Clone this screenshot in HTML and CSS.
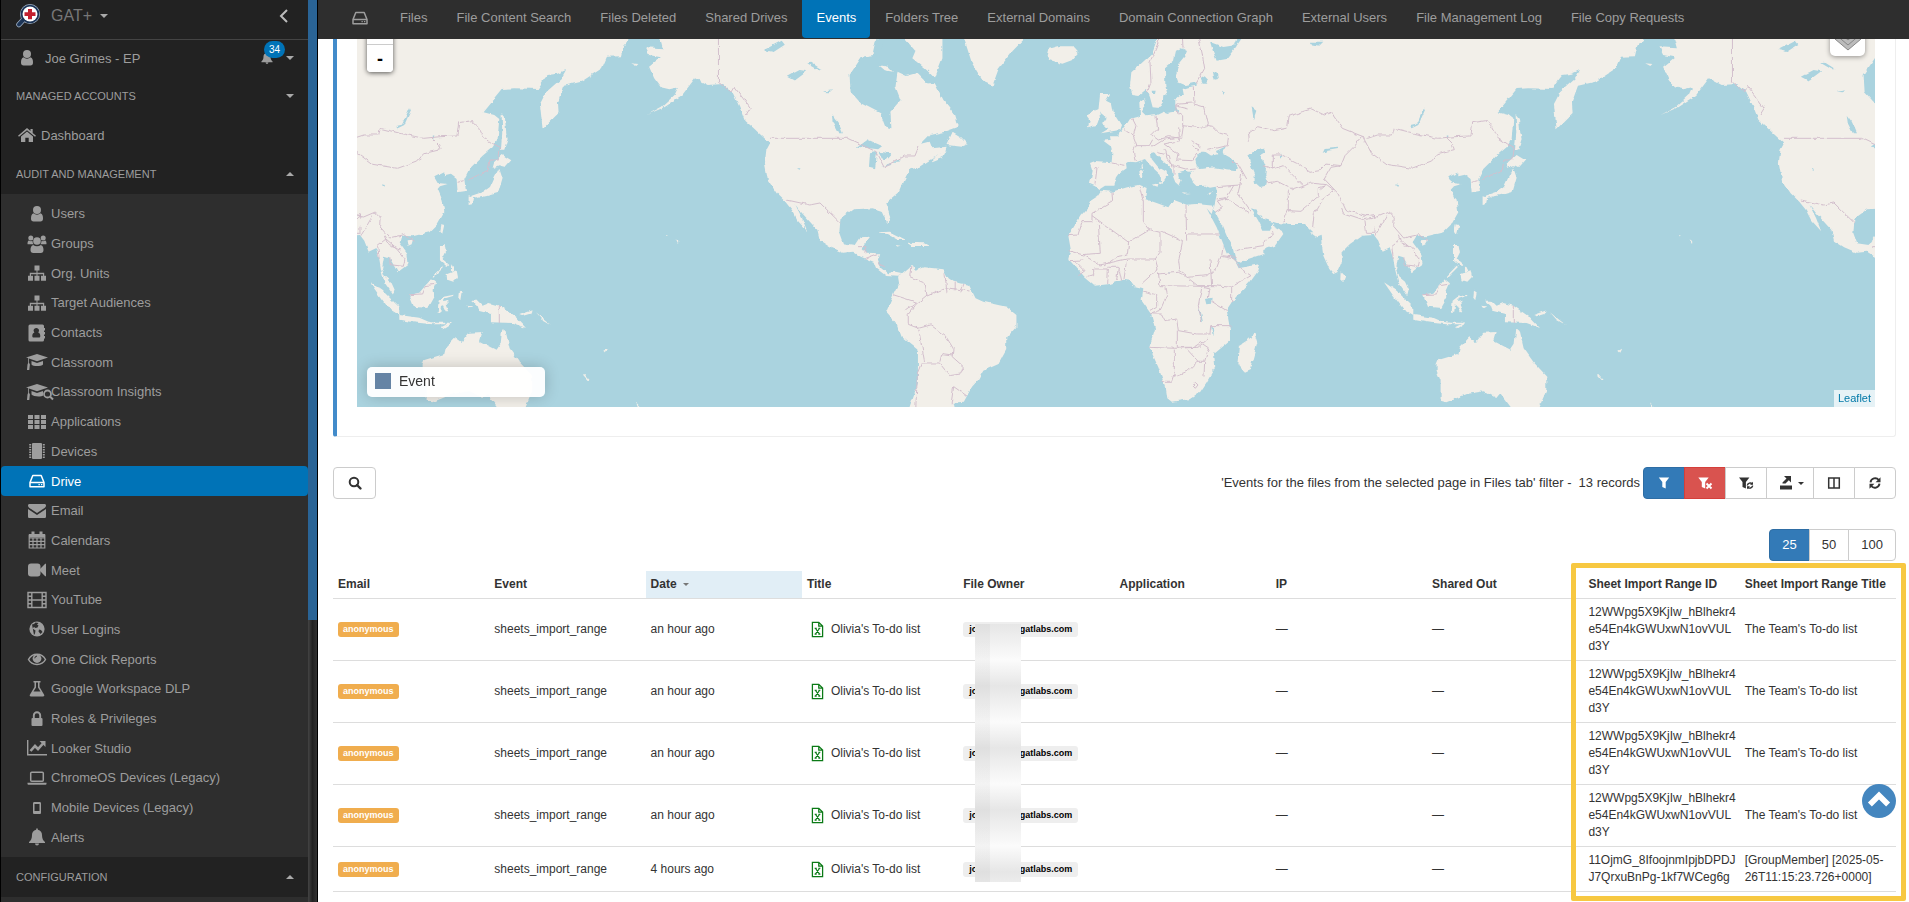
FILE: index.html
```html
<!DOCTYPE html>
<html lang="en">
<head>
  <meta charset="UTF-8">
  <title>GAT+ - Drive - Events</title>
  <link rel="stylesheet" href="styles.css">
</head>
<body>
  <!-- icon sprite -->
  <svg class="sprite" aria-hidden="true">
    <symbol id="i-user" viewBox="0 0 20 20"><circle cx="10" cy="6" r="4"/><path d="M6.500 9.200C4.500 10 4 12 4 14.500 4 16.800 5 17.500 6.500 17.500h7c1.500 0 2.500-.7 2.500-3 0-2.500-.5-4.500-2.500-5.300a5 5 0 0 1-7 0z"/></symbol>
    <symbol id="i-users" viewBox="0 0 20 20"><circle cx="3.800" cy="4" r="2.500"/><circle cx="16.200" cy="4" r="2.500"/><circle cx="10" cy="7" r="3.800"/><path d="M.5 10c0-2 .5-3.500 1.500-3.500 1 .8 2.500.9 3.500.3 0 1.500.4 2.700 1.200 3.500H1.500C.8 10.300.5 10.200.5 10zM19.500 10c0-2-.5-3.500-1.500-3.500-1 .8-2.500.9-3.500.3 0 1.500-.4 2.700-1.200 3.500h5.200c.7 0 1-.1 1-.3zM6.200 11c2.200 1.600 5.400 1.600 7.600 0 2 .6 2.700 2.500 2.700 5 0 2-1 3-2.700 3H6.200c-1.700 0-2.700-1-2.700-3 0-2.500.7-4.400 2.700-5z"/></symbol>
    <symbol id="i-sitemap" viewBox="0 0 20 20"><path d="M7.500 2.500h5v5h-2v2.300h6.700v3H19v5h-5v-5h2v-1.600h-5.500v1.600h2v5h-5v-5h2v-1.600H4v1.600h2v5H1v-5h1.800v-3h6.700V7.500h-2z"/></symbol>
    <symbol id="i-contacts" viewBox="0 0 20 20"><path fill-rule="evenodd" d="M3 1.500h12.500a1.500 1.500 0 0 1 1.500 1.500v2h1v2.500h-1v1.500h1v2.500h-1V13h1v2.500h-1V17a1.500 1.500 0 0 1-1.500 1.500H3A1.500 1.500 0 0 1 1.500 17V3A1.500 1.500 0 0 1 3 1.500zM9.300 5a2.600 2.600 0 0 0-1.900 4.500C6 9.800 5.300 11.300 5.300 13c0 1 .5 1.500 1.500 1.500h5c1 0 1.500-.5 1.500-1.500 0-1.700-.7-3.200-2.100-3.500A2.600 2.600 0 0 0 9.300 5z"/></symbol>
    <symbol id="i-cap" viewBox="0 0 22 20"><path d="M11 2l11 3.500-11 3.800-8-2.700v4.200l.9 1.700-.6 5.500H1l.5-5.500.7-1.700V6.100L0 5.500z"/><path d="M5.500 9l5.500 2 6-2v3.500c-1.500 2-10 2.300-11.500 0z"/></symbol>
    <symbol id="i-insights" viewBox="0 0 28 20"><path d="M11 2l11 3.500-11 3.800-8-2.700v4.200l.9 1.700-.6 5.500H1l.5-5.500.7-1.700V6.100L0 5.500z"/><path d="M5.500 9l5.500 2 6-2v4.500c-1.500 1.500-10 1.300-11.500-1z"/><circle cx="21.500" cy="12" r="3.500" fill="#2e2e2e" stroke="currentColor" stroke-width="1.800"/><path d="M24 14.500l3 3" stroke="currentColor" stroke-width="2"/></symbol>
    <symbol id="i-th" viewBox="0 0 20 20"><path d="M1 3h5v4H1zM7.500 3h5v4h-5zM14 3h5v4h-5zM1 8h5v4H1zM7.500 8h5v4h-5zM14 8h5v4h-5zM1 13h5v4H1zM7.500 13h5v4h-5zM14 13h5v4h-5z"/></symbol>
    <symbol id="i-chip" viewBox="0 0 20 20"><rect x="5" y="2" width="10" height="16" rx="1"/><path d="M3.200 3v14M16.800 3v14" stroke="currentColor" stroke-width="2" stroke-dasharray="1.500 1"/></symbol>
    <symbol id="i-hdd" viewBox="0 0 20 20"><path d="M3 11.500L5.800 4.500h8.400L17 11.500v4.300H3z M3 11.500h14" fill="none" stroke="currentColor" stroke-width="1.500" stroke-linejoin="round"/><path d="M11.500 13h1.300v1.300h-1.300zM14 13h1.300v1.300H14z"/></symbol>
    <symbol id="i-mail" viewBox="0 0 20 20"><path d="M1 4.500C1 3.500 1.700 3 2.500 3h15c.8 0 1.500.5 1.500 1.500 0 1-.6 1.800-1.400 2.400L10 12 2.400 6.900C1.600 6.300 1 5.500 1 4.500z"/><path d="M1 8l9 6 9-6v7.500c0 1-.7 1.500-1.500 1.500h-15C1.700 17 1 16.500 1 15.500z"/></symbol>
    <symbol id="i-calendar" viewBox="0 0 20 20"><path d="M2.200 5h15.600v13H2.200zM2.200 8h15.600M2.200 11.400h15.600M2.200 14.700h15.600M6 8v10M10 8v10M14 8v10" fill="none" stroke="currentColor" stroke-width="1.200"/><path d="M2 4h16v3.500H2zM4.500 1.500h3V6h-3zM12.500 1.500h3V6h-3z"/></symbol>
    <symbol id="i-video" viewBox="0 0 20 20"><rect x="1" y="3.500" width="12.500" height="13" rx="3"/><path d="M13 9l5.200-5.200H19v12.400h-.8L13 11z"/></symbol>
    <symbol id="i-film" viewBox="0 0 20 20"><path d="M1 2.500h18v15H1zM4.800 2.500v15M15.200 2.500v15M4.800 10h10.400M1 6.200h3.800M1 10h3.800M1 13.800h3.800M15.200 6.200H19M15.200 10H19M15.200 13.800H19" fill="none" stroke="currentColor" stroke-width="1.400"/></symbol>
    <symbol id="i-globe" viewBox="0 0 20 20"><circle cx="10" cy="10" r="7.600"/><path d="M5 5.500l2-.5 1.500-1.500 3 .5-1.500 1.500 1.500 1-1 2-2 .5L7 8 5.500 9.500l3 2-.5 3-1 1.500M14 11l-2-.5-.5 2 2 2.500 2-2z" fill="#2e2e2e"/></symbol>
    <symbol id="i-eye" viewBox="0 0 20 20"><path d="M1.500 10.500C5 3.500 15 3.500 18.500 10.500 15 17 5 17 1.500 10.500z" fill="none" stroke="currentColor" stroke-width="1.500"/><circle cx="10" cy="9.500" r="4.400"/><path d="M7.800 9.300A2.200 2.200 0 0 1 10 7.100" fill="none" stroke="#2e2e2e"/></symbol>
    <symbol id="i-flask" viewBox="0 0 20 20"><path fill-rule="evenodd" d="M6.500 2h7v1.500h-1V8l4.500 7.500c.7 1.200.2 2-1 2H4c-1.200 0-1.700-.8-1-2L7.500 8V3.500h-1zM9 3.500v5L6.500 12.500h7L11 8.500v-5z"/></symbol>
    <symbol id="i-lock" viewBox="0 0 20 20"><rect x="4.500" y="9" width="11" height="8" rx="1"/><path d="M6.800 9.500V6.500a3.200 3.200 0 0 1 6.400 0v3" fill="none" stroke="currentColor" stroke-width="1.900"/></symbol>
    <symbol id="i-chart" viewBox="0 0 20 20"><path d="M.7 2v14.800H20" fill="none" stroke="currentColor" stroke-width="1.400"/><path d="M3.500 13l4.500-5 3 3 5-5.500" fill="none" stroke="currentColor" stroke-width="2.600"/><path d="M12.500 3H18.500v6z"/></symbol>
    <symbol id="i-laptop" viewBox="0 0 20 20"><rect x="3.700" y="4.200" width="12.600" height="9" rx="1" fill="none" stroke="currentColor" stroke-width="1.500"/><path d="M.5 14.800h19v1c0 .7-.5 1-1.300 1H1.800c-.8 0-1.300-.3-1.300-1z"/></symbol>
    <symbol id="i-mobile" viewBox="0 0 20 20"><path fill-rule="evenodd" d="M7.500 4h5c1 0 1.500.5 1.500 1.500v9c0 1-.5 1.500-1.500 1.500h-5c-1 0-1.500-.5-1.500-1.500v-9C6 4.500 6.500 4 7.500 4zM7.500 6v7h5V6z"/></symbol>
    <symbol id="i-bell" viewBox="0 0 20 20"><path d="M9.200 1.500h1.600v1.200c3 .5 4.200 2.800 4.200 5.300 0 3.500 1 5.500 3 7v1H2v-1c2-1.500 3-3.500 3-7 0-2.500 1.200-4.800 4.200-5.300zM8 16.500h4a2 2 0 0 1-4 0z"/></symbol>
    <symbol id="i-home" viewBox="0 0 20 20"><path d="M10 3l3.500 3V4h2.200v4l3.300 2.800-1 1L10 5.200 2 11.800l-1-1z"/><path d="M10 6.500l6 5V17h-4.300v-4.300H8.300V17H4v-5.500z"/></symbol>
    <symbol id="i-search" viewBox="0 0 20 20"><circle cx="9" cy="9" r="4.300" fill="none" stroke="currentColor" stroke-width="2"/><path d="M12 12l3.500 3.500" stroke="currentColor" stroke-width="2.400" stroke-linecap="round"/></symbol>
    <symbol id="i-filter" viewBox="0 0 20 20"><path d="M4.800 4.500h10.400L11.700 9v6.500L8.300 14V9z"/></symbol>
    <symbol id="i-filter-x" viewBox="0 0 20 20"><path d="M3.300 4.500h10.400L10.200 9v6.500L6.800 14V9z"/><path d="M11.500 10.500l5 5M16.500 10.500l-5 5" stroke="currentColor" stroke-width="1.900"/></symbol>
    <symbol id="i-filter-r" viewBox="0 0 20 20"><path d="M3 4.500h10.400L9.900 9v6.500L6.500 14V9z"/><path d="M11.300 12.500a2.900 2.900 0 0 1 5-1.500M16.700 12.700a2.900 2.900 0 0 1-5 1.500" fill="none" stroke="currentColor" stroke-width="1.400"/><path d="M17 8.800v3h-3zM11 16.300v-3h3z"/></symbol>
    <symbol id="i-export" viewBox="0 0 20 20"><path d="M4 12.500h12v4H4z"/><path d="M8 3h7v6.500l-2.200-2.200-3.300 3.300H6.500V9.500l4-4z"/></symbol>
    <symbol id="i-columns" viewBox="0 0 20 20"><path d="M4.700 5h10.600v10H4.700zM10 5v10" fill="none" stroke="currentColor" stroke-width="1.500"/></symbol>
    <symbol id="i-refresh" viewBox="0 0 20 20"><path d="M5.500 9.300a4.700 4.700 0 0 1 8.300-2.300M14.500 10.700a4.700 4.700 0 0 1-8.300 2.300" fill="none" stroke="currentColor" stroke-width="1.900"/><path d="M15.500 4.300v4.900h-4.900zM4.500 15.700v-4.900h4.900z"/></symbol>
    <symbol id="i-sheet" viewBox="0 0 16 20"><path d="M2 1.500h7.500L14 6v12.500H2zM9.500 1.500V6H14" fill="none" stroke="#0b7a16" stroke-width="1.500"/><path d="M5.500 8.500l5 7M10.500 8.500l-5 7M4.600 8.500h2.600M9 8.500h2.400M4.600 15.500H7M9 15.500h2.400" fill="none" stroke="#0b7a16" stroke-width="1.400"/></symbol>
    <symbol id="i-up" viewBox="0 0 20 20"><path d="M3.500 12.500L10 6l6.500 6.500" fill="none" stroke="currentColor" stroke-width="4"/></symbol>
  </svg>

  <div class="app">
    <aside class="sidebar">
      <div class="side-scroll">
        <header class="brand">
          <svg class="brand-logo" viewBox="0 0 24 24"><path d="M8.500 14.500L3 20.500" stroke="#9fb0c4" stroke-width="5.500" stroke-linecap="round"/><circle cx="14" cy="10" r="10" fill="#9fb0c4"/><path d="M8.500 14.500L3 20.500" stroke="#1d3557" stroke-width="4" stroke-linecap="round"/><circle cx="14" cy="10" r="9.300" fill="#1d3557"/><circle cx="14" cy="10" r="7.500" fill="#fff"/><path d="M12 5h4v3.200h3.500v3.800H16v3.200h-4V12H8.500V8.200H12z" fill="#c3202f"/></svg>
          <span class="brand-name">GAT+</span>
          <span class="caret"></span>
          <button class="collapse" aria-label="Collapse menu"><svg width="10" height="14" viewBox="0 0 10 14"><path d="M8 1L2 7l6 6" fill="none" stroke="#bbb" stroke-width="2"/></svg></button>
        </header>
        <div class="account">
          <svg class="icon"><use href="#i-user"/></svg>
          <a href="#">Joe Grimes - EP</a>
          <span class="alerts">
            <svg class="icon-sm"><use href="#i-bell"/></svg>
            <span class="badge">34</span>
          </span>
          <span class="caret"></span>
        </div>
        <div class="section">MANAGED ACCOUNTS<span class="caret"></span></div>
        <a class="home" href="#"><svg class="icon"><use href="#i-home"/></svg>Dashboard</a>
        <div class="section">AUDIT AND MANAGEMENT<span class="caret up"></span></div>
        <nav class="menu">
          <a href="#"><svg class="icon"><use href="#i-user"/></svg>Users</a>
          <a href="#"><svg class="icon"><use href="#i-users"/></svg>Groups</a>
          <a href="#"><svg class="icon"><use href="#i-sitemap"/></svg>Org. Units</a>
          <a href="#"><svg class="icon"><use href="#i-sitemap"/></svg>Target Audiences</a>
          <a href="#"><svg class="icon"><use href="#i-contacts"/></svg>Contacts</a>
          <a href="#"><svg class="icon icon-cap"><use href="#i-cap"/></svg>Classroom</a>
          <a href="#"><svg class="icon icon-wide"><use href="#i-insights"/></svg>Classroom Insights</a>
          <a href="#"><svg class="icon"><use href="#i-th"/></svg>Applications</a>
          <a href="#"><svg class="icon"><use href="#i-chip"/></svg>Devices</a>
          <a href="#" class="active"><svg class="icon"><use href="#i-hdd"/></svg>Drive</a>
          <a href="#"><svg class="icon"><use href="#i-mail"/></svg>Email</a>
          <a href="#"><svg class="icon"><use href="#i-calendar"/></svg>Calendars</a>
          <a href="#"><svg class="icon"><use href="#i-video"/></svg>Meet</a>
          <a href="#"><svg class="icon"><use href="#i-film"/></svg>YouTube</a>
          <a href="#"><svg class="icon"><use href="#i-globe"/></svg>User Logins</a>
          <a href="#"><svg class="icon"><use href="#i-eye"/></svg>One Click Reports</a>
          <a href="#"><svg class="icon"><use href="#i-flask"/></svg>Google Workspace DLP</a>
          <a href="#"><svg class="icon"><use href="#i-lock"/></svg>Roles &amp; Privileges</a>
          <a href="#"><svg class="icon"><use href="#i-chart"/></svg>Looker Studio</a>
          <a href="#"><svg class="icon"><use href="#i-laptop"/></svg>ChromeOS Devices (Legacy)</a>
          <a href="#"><svg class="icon"><use href="#i-mobile"/></svg>Mobile Devices (Legacy)</a>
          <a href="#"><svg class="icon"><use href="#i-bell"/></svg>Alerts</a>
        </nav>
        <div class="section">CONFIGURATION<span class="caret up"></span></div>
        <div class="menu-rest"></div>
      </div>
      <div class="side-track"><div class="side-thumb"></div></div>
    </aside>

    <main class="main">
      <nav class="tabs">
        <a href="#" class="tab-icon" aria-label="Drive"><svg class="icon"><use href="#i-hdd"/></svg></a>
        <a href="#">Files</a>
        <a href="#">File Content Search</a>
        <a href="#">Files Deleted</a>
        <a href="#">Shared Drives</a>
        <a href="#" class="active">Events</a>
        <a href="#">Folders Tree</a>
        <a href="#">External Domains</a>
        <a href="#">Domain Connection Graph</a>
        <a href="#">External Users</a>
        <a href="#">File Management Log</a>
        <a href="#">File Copy Requests</a>
      </nav>

      <div class="content">
        <section class="panel">
          <div class="map">
            <svg class="world" viewBox="0 0 1518 368" preserveAspectRatio="xMidYMid slice">
              <defs>
                <filter id="rough" x="0" y="0" width="100%" height="100%"><feTurbulence type="fractalNoise" baseFrequency="0.15" numOctaves="2" seed="4"/><feDisplacementMap in="SourceGraphic" scale="4" xChannelSelector="R" yChannelSelector="G"/></filter>
                <!-- Europe, Asia, Africa and Australia -->
                <g id="old-world">
                  <g class="land">
                    <path d="M325 -9L305 45 272 75 244 100 240 140 247 165 268 168 290 150 300 175 308 205 328 207 338 190 340 172 352 165 346 140 345 85 372 62 378 35 395 28 411 36 405 50 385 75 378 110 385 130 405 138 440 130 440 140 415 145 398 150 402 170 385 172 376 180 376 200 385 217 350 222 340 218 320 228 290 232 276 218 288 190 285 178 268 190 270 232 240 240 222 268 205 280 202 292 180 292 182 303 160 305 182 322 187 340 185 370 135 366 120 372 128 395 120 435 132 440 150 450 165 440 190 440 198 415 205 405 230 388 228 372 240 368 258 370 285 360 297 375 315 392 332 408 333 425 326 432 333 436 345 420 352 408 350 398 325 385 305 360 303 342 312 340 322 352 345 372 365 390 370 415 376 430 388 440 395 424 386 412 384 400 402 395 420 398 438 392 422 400 420 412 428 430 440 442 465 440 480 446 497 443 502 460 495 490 490 510 515 555 530 590 552 630 560 664 570 668 610 655 640 645 640 633 675 620 700 585 695 575 674 565 670 552 660 575 640 575 625 545 603 508 618 512 640 540 680 552 720 555 765 555 780 570 790 580 780 580 800 595 812 590 820 650 838 690 850 705 862 700 875 670 875 640 900 615 935 590 972 588 985 605 998 638 1020 628 1030 660 1035 690 1045 730 1072 768 1076 752 1065 728 1045 712 1038 690 1045 650 1060 655 1085 700 1118 675 1114 645 1088 610 1100 590 1130 592 1180 580 1205 555 1225 520 1220 485 1205 450 1212 442 1235 435 1205 432 1195 415 1225 400 1225 412 1245 407 1262 420 1265 460 1290 456 1285 420 1300 390 1340 350 1370 325 1385 300 1390 240 1375 228 1343 220 1400 150 1435 148 1505 150 1525 120 1535 108 1565 104 1590 93 1575 120 1530 160 1512 195 1520 271 1540 250 1568 222 1566 190 1584 140 1636 128 1698 88 1713 53 1755 52 1762 20 1790 -9 1660 -9 1520 -9 580 -9 560 20 530 60 500 65 490 40 475 -9z"/>
                    <path d="M155 455L185 458 232 445 268 437 290 447 285 480 320 492 355 505 370 482 410 497 440 495 492 500 485 525 470 508 500 565 520 615 530 640 555 665 566 688 630 675 625 695 600 730 560 772 545 790 530 812 540 870 540 905 510 930 492 945 496 985 470 1030 450 1060 420 1080 365 1088 352 1078 348 1050 325 985 298 925 315 870 303 825 275 785 280 748 250 740 240 725 220 722 180 735 135 740 105 715 55 660 62 630 55 590 92 530 115 505 122 485 145 470z"/>
                    <path d="M150 165l30 0-12 20 15 8 5 25 25 40-5 15-55 10 25-15-22-12 14-20-25-20z"/>
                    <path d="M125 218l22-8 3 25-8 22-28 8 5-20-8-10z"/>
                    <path d="M-10 50l5-20 30-8 40 0 18 20-18 22-28 10-40-12z"/>
                    <path d="M470 -9l10 18 40 15 35-5 10-28z"/>
                    <path d="M305 437l20-4-2 10zM268 398l10-4 2 18-10 4zM272 378l6-6 0 16-6 2zM395 460l28 2-20 2zM472 463l18-4-12 8z"/>
                    <path d="M612 880l10 30-22 80-18 8-17-20 5-60 28-18zM872 697l14 15-6 14-9-4z"/>
                    <path d="M1002 730l38 25 50 50 0 23-30-18-30-40zM1090 828l60 8 28 12 22 3 40 0 0 5-50 0-60-6-40-8zM1215 865l30-15 4 2-25 16z"/>
                    <path d="M1120 767l30-6 35-40 15 12-10 22 2 20-18 32-40-4zM1208 785l15-12 30-6-2 4-28 8-2 10 18-4-10 12 8 20-8 0-8-18-6 2-2 20-8 0zM1272 755l8 5-4 24-6-8zM1290 800l22 2-10 6z"/>
                    <path d="M1305 785l20 0 15 15 20-8 30 8 50 35 30 32-40-15-65-2 0-25-38-10-5-15zM1450 828l40-14-5 10-25 8zM1500 820l22 18 26 20-28-16z"/>
                    <path d="M1212 618l14 0 4 22-10 20 20 18-6 6-22-20zM1245 675l10 20-10 4zM1232 706l30-12 4 20-14 14-18-6zM1220 680l4 4-30 30-4-2zM1217 556l8 2-6 26-6-6zM1115 604l16-2-4 14-10 4z"/>
                    <path d="M1397 225l10 12 4 45 4 18-10 32-10 0 4-52zM1400 348l26 16-18 20-20-5-18 8 4-14zM1390 386l10 30-12 42-35 10-40 8-10 8 4-14 35-12 20-14 12-26zM1298 472l14 4-4 20-10 2zM1318 468l18-2-12 10z"/>
                    <path d="M1160 975l5-12 60-18 5-20 28-30 20 14 22-28 40-2-8 28 50 25 12-18 5-46 10 8 12 52 30 42 38 40 0 45-25 58-75 0-38-50-12 14-38-20-50 8-62 25-17-5 0-60-12-30z"/>
                    <path d="M1645 1005l16 18-6 0-14-16zM1702 935l12-6-6 12zM1800 1090l25 26-12 8z"/>
                  </g>
                  <g class="lake">
                    <path d="M440 380l-4-20 18-22 12 0 18 12 18-4-4-10 30-14-12 20 32 18 16 24-8 10-30-4-35-5-40 5z"/>
                    <path d="M595 350l25-20 22-4 4 16-14 8 10 24 6 16-2 18 8 20-2 12-22 4-16-14 0-22-10-24z"/>
                    <path d="M1078 262l20-5 24-52 3 8-20 45-20 10zM818 342l6-12 40-4 0 4-34 6zM452 120l12-8 10 10-6 12-10 0zM488 95l12 5 4 20-10 2zM515 155l10 6-4 6zM605 205l14 10-8 25zM465 780l20-4-2 18-14 2zM445 810l4-2 10 40-5 2zM484 860l4 0 4 30-4 0zM305 155l12 0-2 10-8 0zM1190 290l5-1-2 12zM1035 436l12 2-2 6zM690 340l4 12-4 4zM355 700l4 0 0 4-4 0zM780 8l40 0-12 12-26-4z"/>
                  </g>
                  <g class="border">
                    <path d="M333 -9L300 70 303 130 292 160M397 -9l2 35M445 -9l12 55 7 42-25 45"/>
                    <path d="M430 145l2 50 28 8 12 50-6 15-68-8 0-30-20-14 0-20 50-4M376 200l40 10M318 230l5 40-18 18 20 15 30-10 40 5 5-38M248 240l10 20-8 30-28-18M250 290l10 28-10 18 6 30M258 320l40 0 10-18M305 325l40-25 40-5 5 10-48 10M388 295l-2-30M342 315l42 30-4 18 46 2 16-22M342 330l10 30 20 20 35 10 30-3M372 372l0 35M322 340l36 10 8 32M425 305l22 15-2 15-18-15M185 372l38 7M133 385l8 2-6 50M466 258l22 4 20 20 28 8-4 30-60 14"/>
                    <path d="M595 305l-2-20 30-22 50 12 40-8 4-35 40-14 28-8 38 18 20-8 34 48 50 20 26 10 30-10 45 0 5-20 60 15 70 15 50-5 50-2 5-40 40-6 20 20 15 30 30 20 20 10-5 38-26 0-5 30-60 30M938 292l26 50 46 34 75 12 60-22 18-22 50-12-5-15-20-20"/>
                    <path d="M935 295l-20 25-30 30-12 30-30 5-20 35 40 42 15 30 10 22 60 15 35 5 35-15 15 15-2 28 30 35 45-10 30 20"/>
                    <path d="M670 390l0-45 20 0 50 25 40 30 28-5 20-20 45 5M670 390l-30-10M652 432l30-5 48 25 30-10 20-10 50 5-18 15M670 390l30-10 60 60M715 455l0 60-15 35M715 515l35 2 55-45 0-25 28-8 20 15-30 20-30 50-5 40M590 420l-25-45-20-5M500 443l70-5 5-35M570 438l-6 25 22 30 18 25M500 480l30-4 22-38M495 520l22-14-15-20 26-8 70 45M560 635l15-5 65-10 10-20 20-10-2-15"/>
                    <path d="M875 510l5 12 60 20 35-5-2-10-35 5M945 545l5 38 22 0 0-20M975 590l15-25 20-35M1030 660l-5-40 25-20 35 30 22 30-5 22-40-5 0-22M1045 590l10 25 40 15M1120 767l40-2 10-25 25-4M1390 800l0 52M1265 430l18-5"/>
                    <path d="M186 458l2 30-62 35 0 25-30 0-12 40-30 2M145 470M126 530l110 80 64-38-20-25 0-60-12-45M145 555l6 88-55 4-40-12M300 572l30 8 0 60-14 20-86 0-80 18-50-30M236 610l-4 38-30 5-40 28M330 575l68 30-12 60 4 30 15 10M408 497l2 108M410 585l98 0M316 660l8 30-50 45M325 705l60-5 20 10 38 30 50 0 50 5 60-35-30-20-20-30-40-8-15 40-25 18-60 5M560 655l-45-5 5-30M545 745l0 45M480 660l5 80M325 700l5 40 130 2 20 5-5 30M280 757l40 10 0 35-20 12M345 745l5 25-20 45-30 10M305 825l30 0 10 20 35-5 5 35 55 10 40 0 2-25 60 0M455 745l-10 55 10 50M485 787l45 28M382 875l0 50 62 0 30-25M298 925l75 3 65-3M373 932l0 70-8 25-30 0M412 932l32 35 20 0 12-40-24-16-18 12M444 967l-30 30-42 15M464 968l-2 45M428 1040l8-10 8 8-8 10z"/>
                    <path d="M75 665l30 30-20 15M128 690l0 20-15 5M130 690l45 0-2 45M175 685l30 0-5 38M205 680l10 45M230 665l-8 55M60 665l40-2"/>
                  </g>
                </g>
                <!-- the Americas -->
                <g id="new-world">
                  <g class="land">
                    <path d="M665 105L672 145 638 142 645 165 668 172 645 200 655 235 668 262 685 268 702 262 695 285 670 320 640 345 600 372 670 325 710 285 735 235 760 255 790 252 808 275 822 320 832 360 850 385 868 410 882 430 875 450 872 490 878 540 895 580 912 605 925 630 935 660 955 694 945 655 932 615 945 640 975 690 980 722 1000 742 1025 758 1045 755 1060 770 1085 785 1090 805 1110 828 1132 830 1142 820 1128 815 1112 820 1100 805 1092 785 1098 760 1070 758 1062 745 1078 710 1058 712 1048 735 1025 730 1018 700 1020 655 1045 628 1085 625 1100 632 1112 672 1118 650 1108 610 1135 575 1145 540 1155 510 1175 500 1195 480 1225 455 1228 440 1200 445 1195 425 1178 432 1195 405 1225 395 1252 380 1245 345 1222 300 1205 250 1190 250 1170 220 1150 228 1132 215 1128 260 1138 300 1118 335 1120 385 1108 380 1098 340 1060 310 1040 275 1038 225 1062 170 1085 165 1100 105z"/>
                    <path d="M1240 395l-12 40 30 5 12-8-14-22zM1200 478l28-28-8 25-20 12zM1140 105l80 0 0 70-15 60-16-25-28-35 6-22zM1095 195l18 5 10 15-16-4zM1260 105l18 85 22 55 18 12 12-50 28-55 30-47z"/>
                    <path d="M1133 830L1160 795 1165 812 1185 802 1222 808 1232 835 1242 845 1272 855 1285 895 1300 905 1345 920 1365 945 1365 980 1345 1015 1345 1050 1330 1092 1300 1112 1290 1140 1278 1160 1262 1205 1240 1208 1245 1245 1150 1245 1172 1150 1172 1050 1140 1010 1130 970 1110 935 1125 880 1135 850z"/>
                    <path d="M1092 697l25-2 32 25-16 0-22-18zM1150 728l34 2 10 8-34 0zM1128 735l12 2-8 3zM697 718l8 8-4 5zM678 702l4 2-3 2zM610 190l14 2-4 6z"/>
                  </g>
                  <g class="lake">
                    <path d="M870 150l35-28 6 12-22 22zM915 230l25-20 15 4-25 28zM1005 345l10 20 10 35-8 0-10-30zM1052 440l20-22 30 20-8 10zM1078 460l14-5-4 50-12-5zM1095 455l26 5-15 25zM1100 500l22-12-4 8zM1122 488l16-8-4 8zM985 275l20-4-8 6zM955 190l8-2 20 20-8 0zM935 508l4 0 2 6zM1205 410l28-8-6 25-18-4zM1090 118l16 0-10 60-12-20zM1180 220l14 30-8-2z"/>
                  </g>
                  <g class="border">
                    <path d="M781 105l0 142 24 28 6-16 18 36 14 30-8 20M882 415l152 0 56 40 16 48 40-35 20 0 8-30M915 600l45 15 20-6 40 60M1055 740l15 0-2 20M1068 775l26-15M1092 790l15 10"/>
                    <path d="M1158 798l-2 32 30 20 4 38 38-25 45 10M1225 820l4 60M1245 848l0 26M1262 852l-6 25M1125 885l45 22-22 25M1190 885l-22 28-15 30 0 30 20 12 24-10 30 35 14 35-2 25 22 30-5 22-22 5-20-38-35 0-8 30-4 130M1173 985l12 100M1215 1085l4-24 20 4M1242 1160l-5 50M1242 1160l26 28"/>
                  </g>
                </g>
              </defs>
              <g filter="url(#rough)">
                <use href="#old-world" transform="matrix(.3333 0 0 .3333 693 0)"/>
                <use href="#old-world" transform="matrix(.3333 0 0 .3333 -321 0)"/>
                <use href="#new-world" transform="matrix(.5102 0 0 .3333 -37 -39)"/>
                <use href="#new-world" transform="matrix(.5102 0 0 .3333 977 -39)"/>
              </g>
            </svg>
            <div class="zoom-control"><button aria-label="Zoom in"></button><button aria-label="Zoom out">-</button></div>
            <button class="layers" aria-label="Layers"><svg width="28" height="34" viewBox="0 0 28 34"><g fill="#bbb" stroke="#888"><path d="M1 17l13-9 13 9-13 11z"/><path d="M1 12l13-9 13 9-13 11z"/><path d="M1 7l13-9 13 9-13 11z"/></g></svg></button>
            <div class="legend"><span class="swatch"></span>Event</div>
            <a class="attribution" href="#">Leaflet</a>
          </div>
        </section>

        <div class="toolbar">
          <button class="btn" aria-label="Search"><svg class="icon"><use href="#i-search"/></svg></button>
          <div class="filter-info"><span>'Events for the files from the selected page in Files tab' filter -</span><span>13 records</span></div>
          <div class="btn-group">
            <button class="btn btn-primary" aria-label="Filter"><svg class="icon"><use href="#i-filter"/></svg></button>
            <button class="btn btn-danger" aria-label="Clear filter"><svg class="icon"><use href="#i-filter-x"/></svg></button>
            <button class="btn" aria-label="Reload filter"><svg class="icon"><use href="#i-filter-r"/></svg></button>
            <button class="btn btn-export" aria-label="Export"><svg class="icon"><use href="#i-export"/></svg><span class="caret-sm"></span></button>
            <button class="btn" aria-label="Columns"><svg class="icon"><use href="#i-columns"/></svg></button>
            <button class="btn" aria-label="Refresh"><svg class="icon"><use href="#i-refresh"/></svg></button>
          </div>
        </div>

        <div class="page-size btn-group">
          <button class="btn btn-primary">25</button>
          <button class="btn">50</button>
          <button class="btn">100</button>
        </div>

        <div class="table-wrap">
          <table class="events">
            <thead>
              <tr>
                <th>Email</th><th>Event</th><th class="sorted">Date<span class="caret-sm"></span></th><th>Title</th><th>File Owner</th>
                <th>Application</th><th>IP</th><th>Shared Out</th><th>Sheet Import Range ID</th><th>Sheet Import Range Title</th>
              </tr>
            </thead>
            <tbody>
              <tr>
                <td><span class="label label-warning">anonymous</span></td>
                <td>sheets_import_range</td>
                <td>an hour ago</td>
                <td><span class="file"><svg class="sheet"><use href="#i-sheet"/></svg>Olivia's To-do list</span></td>
                <td><span class="label owner"><span>jo</span><span>gatlabs.com</span></span></td>
                <td></td><td>—</td><td>—</td>
                <td class="range-id">12WWpg5X9KjIw_hBlhekr4e54En4kGWUxwN1ovVULd3Y</td>
                <td>The Team's To-do list</td>
              </tr>
              <tr>
                <td><span class="label label-warning">anonymous</span></td>
                <td>sheets_import_range</td>
                <td>an hour ago</td>
                <td><span class="file"><svg class="sheet"><use href="#i-sheet"/></svg>Olivia's To-do list</span></td>
                <td><span class="label owner"><span>jo</span><span>gatlabs.com</span></span></td>
                <td></td><td>—</td><td>—</td>
                <td class="range-id">12WWpg5X9KjIw_hBlhekr4e54En4kGWUxwN1ovVULd3Y</td>
                <td>The Team's To-do list</td>
              </tr>
              <tr>
                <td><span class="label label-warning">anonymous</span></td>
                <td>sheets_import_range</td>
                <td>an hour ago</td>
                <td><span class="file"><svg class="sheet"><use href="#i-sheet"/></svg>Olivia's To-do list</span></td>
                <td><span class="label owner"><span>jo</span><span>gatlabs.com</span></span></td>
                <td></td><td>—</td><td>—</td>
                <td class="range-id">12WWpg5X9KjIw_hBlhekr4e54En4kGWUxwN1ovVULd3Y</td>
                <td>The Team's To-do list</td>
              </tr>
              <tr>
                <td><span class="label label-warning">anonymous</span></td>
                <td>sheets_import_range</td>
                <td>an hour ago</td>
                <td><span class="file"><svg class="sheet"><use href="#i-sheet"/></svg>Olivia's To-do list</span></td>
                <td><span class="label owner"><span>jo</span><span>gatlabs.com</span></span></td>
                <td></td><td>—</td><td>—</td>
                <td class="range-id">12WWpg5X9KjIw_hBlhekr4e54En4kGWUxwN1ovVULd3Y</td>
                <td>The Team's To-do list</td>
              </tr>
              <tr>
                <td><span class="label label-warning">anonymous</span></td>
                <td>sheets_import_range</td>
                <td>4 hours ago</td>
                <td><span class="file"><svg class="sheet"><use href="#i-sheet"/></svg>Olivia's To-do list</span></td>
                <td><span class="label owner"><span>jo</span><span>gatlabs.com</span></span></td>
                <td></td><td>—</td><td>—</td>
                <td class="range-id">11OjmG_8IfoojnmIpjbDPDJJ7QrxuBnPg-1kf7WCeg6g</td>
                <td>[GroupMember] [2025-05-26T11:15:23.726+0000]</td>
              </tr>
            </tbody>
          </table>
          <div class="redact"></div>
          <div class="highlight"></div>
        </div>
        <button class="to-top" aria-label="Back to top"><svg class="icon"><use href="#i-up"/></svg></button>
      </div>
    </main>
  </div>
</body>
</html>
```
FILE: styles.css
```css
* {
  box-sizing: border-box;
}

html, body {
  margin: 0;
  height: 100%;
  overflow: hidden;
}

body {
  font-family: "Liberation Sans", Arial, sans-serif;
  font-size: 13px;
  color: #333;
  background: #fff;
}

a {
  color: inherit;
  text-decoration: none;
}

button {
  font: inherit;
  color: inherit;
  padding: 0;
}

.sprite {
  position: absolute;
  width: 0;
  height: 0;
}

.icon {
  flex: none;
  width: 20px;
  height: 20px;
  fill: currentColor;
}

.app {
  display: flex;
  height: 100%;
}

/* sidebar */

.sidebar {
  flex: none;
  display: flex;
  width: 318px;
  border: solid #000;
  border-width: 0 1px;
  color: #9d9d9d;
  background: #222;
}

.side-scroll {
  flex: 1;
  display: flex;
  flex-direction: column;
  overflow: hidden;
}

.side-scroll > * {
  flex: none;
}

.side-track {
  width: 9px;
  background: linear-gradient(90deg, #444, #222 50%, #333);
}

.side-thumb {
  height: 620px;
  background: #2a6496;
}

.caret {
  border: 4px solid transparent;
  border-top-color: #aaa;
  border-bottom: 0;
}

.caret.up {
  border-top: 0;
  border-bottom: 4px solid #aaa;
}

.caret-sm {
  display: inline-block;
  border: 3px solid transparent;
  border-top-color: currentColor;
  border-bottom: 0;
  vertical-align: middle;
}

.brand {
  display: flex;
  align-items: center;
  height: 40px;
  padding: 0 19px 7px 15px;
  border-bottom: 1px solid #444;
}

.brand-logo {
  width: 24px;
  height: 24px;
}

.brand-name {
  margin: 0 8px 0 11px;
  font-size: 16px;
  color: #777;
}

.collapse {
  display: flex;
  margin-left: auto;
  border: 0;
  background: none;
}

.account {
  display: flex;
  align-items: center;
  height: 36px;
  padding: 0 14px 0 16px;
}

.account a {
  margin-left: 8px;
}

.alerts {
  position: relative;
  margin-left: auto;
  margin-right: 12px;
  height: 14px;
}

.icon-sm {
  display: block;
  width: 14px;
  height: 14px;
  fill: currentColor;
}

.badge {
  position: absolute;
  left: 4px;
  top: -10px;
  width: 21px;
  border-radius: 9px;
  font-size: 10px;
  line-height: 17px;
  text-align: center;
  color: #fff;
  background: #0073b7;
}

.section {
  display: flex;
  align-items: center;
  justify-content: space-between;
  height: 40px;
  padding: 0 14px 1px 15px;
  font-size: 11px;
}

.home {
  display: flex;
  align-items: center;
  gap: 4px;
  height: 38px;
  padding-left: 16px;
}

.menu {
  display: flex;
  flex-direction: column;
  height: 663px;
  padding: 5px 0;
  background: #2e2e2e;
}

.menu a {
  flex: 1;
  display: flex;
  align-items: center;
  gap: 4px;
  padding-left: 26px;
}

.menu a.active {
  border-radius: 4px;
  color: #fff;
  background: #0073b7;
}

.icon-cap {
  width: 22px;
  margin: 0 -1px;
}

.icon-wide {
  width: 28px;
  margin: 0 -7px 0 -1px;
}

.menu-rest {
  height: 40px;
  background: #2e2e2e;
}

/* top tabs */

.main {
  flex: 1;
  min-width: 0;
  display: flex;
  flex-direction: column;
}

.tabs {
  flex: none;
  display: flex;
  height: 39px;
  padding-left: 16px;
  color: #9d9d9d;
  background: #2e2e2e;
}

.tabs a {
  height: 38px;
  padding: 0 14px 0 15px;
  line-height: 36px;
}

.tabs .tab-icon {
  display: flex;
  align-items: center;
  width: 51px;
  padding: 0 16px 2px;
}

.tabs a.active {
  border-radius: 0 0 4px 4px;
  color: #fff;
  background: #0073b7;
}

.content {
  flex: 1;
  min-height: 0;
  position: relative;
  padding: 0 13px 0 15px;
  overflow: hidden;
}

/* map */

.panel {
  padding: 0 20px 29px;
  border: 1px solid #eee;
  border-left: 4px solid #428bca;
  border-top: 0;
  border-radius: 0 0 3px 3px;
}

.map {
  position: relative;
  height: 368px;
  overflow: hidden;
  background: #aad3df;
}

.world {
  display: block;
  width: 100%;
  height: 100%;
}

.land {
  fill: #f2efe9;
}

.lake {
  fill: #aad3df;
}

.border path {
  fill: none;
  stroke: #d3bfcd;
  stroke-width: 1px;
  vector-effect: non-scaling-stroke;
}

.zoom-control {
  position: absolute;
  left: 10px;
  top: -20px;
  width: 26px;
  border-radius: 4px;
  box-shadow: 0 1px 5px rgba(0, 0, 0, 0.65);
  background: #fff;
  overflow: hidden;
}

.zoom-control button {
  display: block;
  width: 26px;
  height: 26px;
  border: 0;
  border-bottom: 1px solid #ccc;
  font-size: 18px;
  font-weight: bold;
  line-height: 22px;
  color: #000;
  background: #fff;
}

.zoom-control button:last-child {
  height: 27px;
  border: 0;
}

.layers {
  position: absolute;
  right: 10px;
  top: -18px;
  display: flex;
  align-items: center;
  justify-content: center;
  width: 35px;
  height: 35px;
  border: 0;
  border-radius: 5px;
  background: #fff;
  box-shadow: 0 1px 5px rgba(0, 0, 0, 0.4);
}

.legend {
  position: absolute;
  left: 10px;
  bottom: 10px;
  display: flex;
  align-items: center;
  gap: 8px;
  width: 178px;
  height: 30px;
  padding: 0 8px 2px;
  border-radius: 5px;
  font-size: 14px;
  background: rgba(255, 255, 255, 0.95);
  box-shadow: 0 0 15px rgba(0, 0, 0, 0.2);
}

.swatch {
  width: 16px;
  height: 16px;
  background: #6584a5;
}

.attribution {
  position: absolute;
  right: 0;
  bottom: 0;
  padding: 0 4px 1px;
  font-size: 11px;
  line-height: 16px;
  color: #0078a8;
  background: rgba(255, 255, 255, 0.7);
}

/* toolbar */

.toolbar {
  display: flex;
  align-items: center;
  margin-top: 30px;
}

.btn {
  display: flex;
  align-items: center;
  justify-content: center;
  min-width: 43px;
  height: 32px;
  border: 1px solid #ccc;
  border-radius: 4px;
  background: #fff;
}

.filter-info {
  display: flex;
  gap: 7px;
  margin-left: auto;
  margin-right: 4px;
  padding-bottom: 2px;
}

.btn-group {
  display: flex;
}

.btn-group .btn {
  min-width: 42px;
  margin-left: -1px;
  border-radius: 0;
}

.btn-group .btn:first-child {
  border-radius: 4px 0 0 4px;
}

.btn-group .btn:last-child {
  border-radius: 0 4px 4px 0;
}

.btn-group .btn-export {
  min-width: 48px;
  gap: 2px;
}

.btn-group .btn-primary {
  border-color: #2e6da4;
  color: #fff;
  background: #337ab7;
}

.btn-group .btn-danger {
  border-color: #d43f3a;
  color: #fff;
  background: #d9534f;
}

.page-size {
  justify-content: flex-end;
  margin: 30px 0 10px;
}

.page-size .btn {
  min-width: 40px;
  padding: 0 12px 2px;
}

/* events table */

.table-wrap {
  position: relative;
}

.events {
  width: 100%;
  table-layout: fixed;
  border-collapse: collapse;
  font-size: 12px;
  line-height: 17px;
}

.events th,
.events td {
  padding: 5px;
  border-bottom: 1px solid #ddd;
  text-align: left;
  vertical-align: middle;
}

.events th {
  white-space: nowrap;
}

.sorted {
  background: #e1eef6;
}

.sorted .caret-sm {
  margin-left: 6px;
  border-top-color: #777;
}

.events .range-id {
  padding-right: 3px;
  word-break: break-all;
}

.events .file {
  display: flex;
  align-items: center;
  gap: 6px;
  padding-left: 3px;
}

.sheet {
  width: 15px;
  height: 17px;
}

.label {
  display: inline-block;
  padding: 0 5px;
  border-radius: 3px;
  font-size: 9px;
  font-weight: bold;
  line-height: 15px;
  vertical-align: middle;
}

.label-warning {
  color: #fff;
  background: #f0ad4e;
}

.owner {
  display: inline-flex;
  justify-content: space-between;
  width: 115px;
  padding: 0 6px;
  color: #000;
  background: #eee;
}

/* smudge over the account names */
.redact {
  position: absolute;
  left: calc(40% + 17px);
  top: 53px;
  width: 46px;
  height: 258px;
  background:
    linear-gradient(90deg, rgba(0, 0, 0, 0.03) 33%, transparent 33%),
    repeating-linear-gradient(#e6e6e6, #fbfbfb 36px, #e6e6e6 62px);
}

.highlight {
  position: absolute;
  left: calc(80% - 12px);
  right: -10px;
  top: -8px;
  height: 338px;
  border: 5px solid #f7c841;
  border-radius: 2px;
}

.to-top {
  position: absolute;
  right: 13px;
  bottom: 84px;
  display: flex;
  align-items: center;
  justify-content: center;
  width: 34px;
  height: 34px;
  border: 0;
  border-radius: 50%;
  color: #fff;
  background: #4486bf;
}

.to-top .icon {
  width: 28px;
  height: 28px;
}
```
